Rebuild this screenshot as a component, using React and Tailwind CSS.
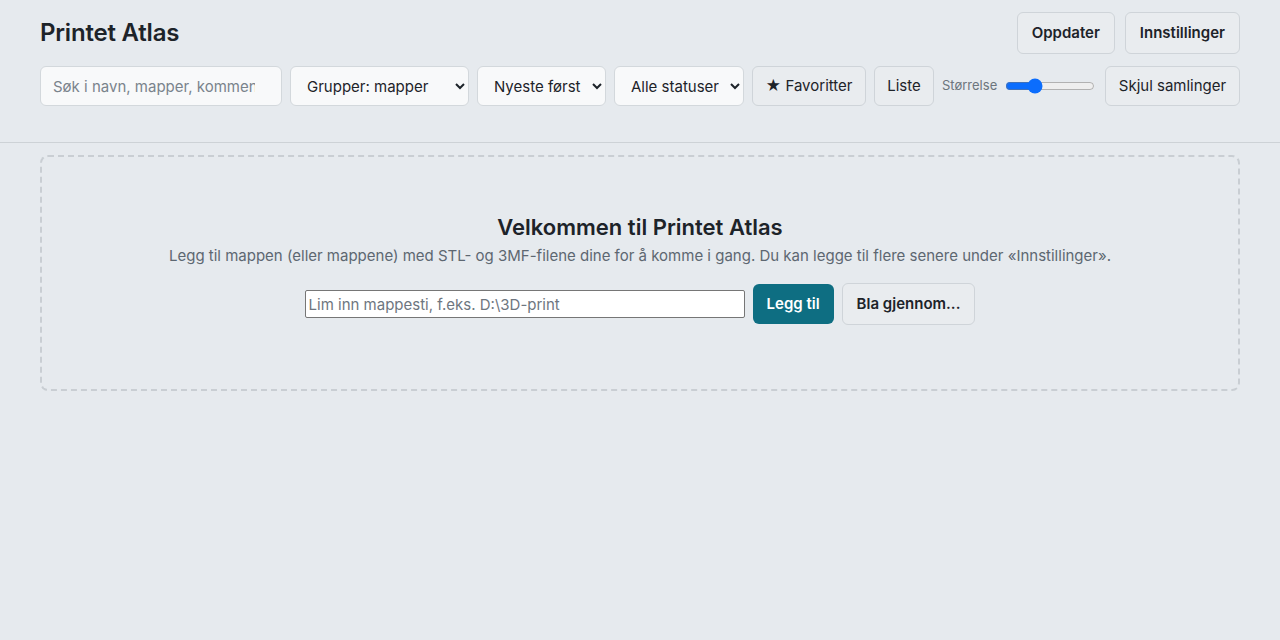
import React, { useState } from 'react';

const btn =
  'h-[40px] px-3 rounded-md border border-[#cfd4d9] bg-[#e9ecef] text-[15px] text-[#1d2329] whitespace-nowrap';
const sel =
  'h-[40px] pl-3 pr-2 rounded-md border border-[#d3d8dc] bg-[#f8f9fa] text-[15px] text-[#1d2329]';

const App = () => {
  const [size, setSize] = useState(30);
  const [path, setPath] = useState('');

  return (
    <div className="min-h-screen bg-[#e6eaee] font-['Inter',sans-serif] text-[#1d2329]">
      <header className="px-10 pt-3 pb-9 border-b border-[#cdd2d6]">
        <div className="flex items-center justify-between">
          <h1 className="text-[24px] font-semibold tracking-[-0.2px]">Printet Atlas</h1>
          <div className="flex gap-[10px]">
            <button className={`${btn} h-[42px] px-[14px] font-semibold`}>Oppdater</button>
            <button className={`${btn} h-[42px] px-[14px] font-semibold`}>Innstillinger</button>
          </div>
        </div>
        <div className="flex items-center gap-2 mt-3">
          <input
            className="h-[40px] w-[242px] pl-3 pr-[26px] rounded-md border border-[#d3d8dc] bg-[#f8f9fa] text-[15px] placeholder:text-[#7a838c] outline-none"
            placeholder="Søk i navn, mapper, kommentarer..."
          />
          <select className={`${sel} w-[179px]`} defaultValue="mapper">
            <option value="mapper">Grupper: mapper</option>
          </select>
          <select className={`${sel} w-[129px]`} defaultValue="nyeste">
            <option value="nyeste">Nyeste først</option>
          </select>
          <select className={`${sel} w-[130px]`} defaultValue="alle">
            <option value="alle">Alle statuser</option>
          </select>
          <button className={`${btn} w-[114px]`}>★ Favoritter</button>
          <button className={`${btn} w-[60px]`}>Liste</button>
          <span className="text-[13px] text-[#6c757d]">Størrelse</span>
          <input
            type="range"
            min="0"
            max="100"
            value={size}
            onChange={e => setSize(e.target.value)}
            className="w-[90px] accent-[#0b6dfd]"
          />
          <button className={`${btn} ml-auto w-[135px]`}>Skjul samlinger</button>
        </div>
      </header>

      <main className="px-10 pt-3">
        <div className="border-2 border-dashed border-[#c9ced3] rounded-lg pt-14 pb-[64px] flex flex-col items-center">
          <h2 className="text-[22px] font-semibold leading-7">Velkommen til Printet Atlas</h2>
          <p className="mt-1 text-[15px] leading-[22px] text-[#5d6771]">
            Legg til mappen (eller mappene) med STL- og 3MF-filene dine for å komme i gang. Du kan legge til flere senere under «Innstillinger».
          </p>
          <div className="flex items-center gap-2 mt-4">
            <input
              value={path}
              onChange={e => setPath(e.target.value)}
              placeholder="Lim inn mappesti, f.eks. D:\3D-print"
              className="w-[440px] h-[28px] px-[3px] border border-[#767676] rounded-[2px] bg-white text-[15px] placeholder:text-[#6e7680] outline-none"
            />
            <button className="h-[40px] px-[14px] rounded-md bg-[#0e6e82] text-white text-[15px] font-semibold">
              Legg til
            </button>
            <button className={`${btn} h-[42px] px-[14px] font-semibold`}>Bla gjennom...</button>
          </div>
        </div>
      </main>
    </div>
  );
};

export default App;
